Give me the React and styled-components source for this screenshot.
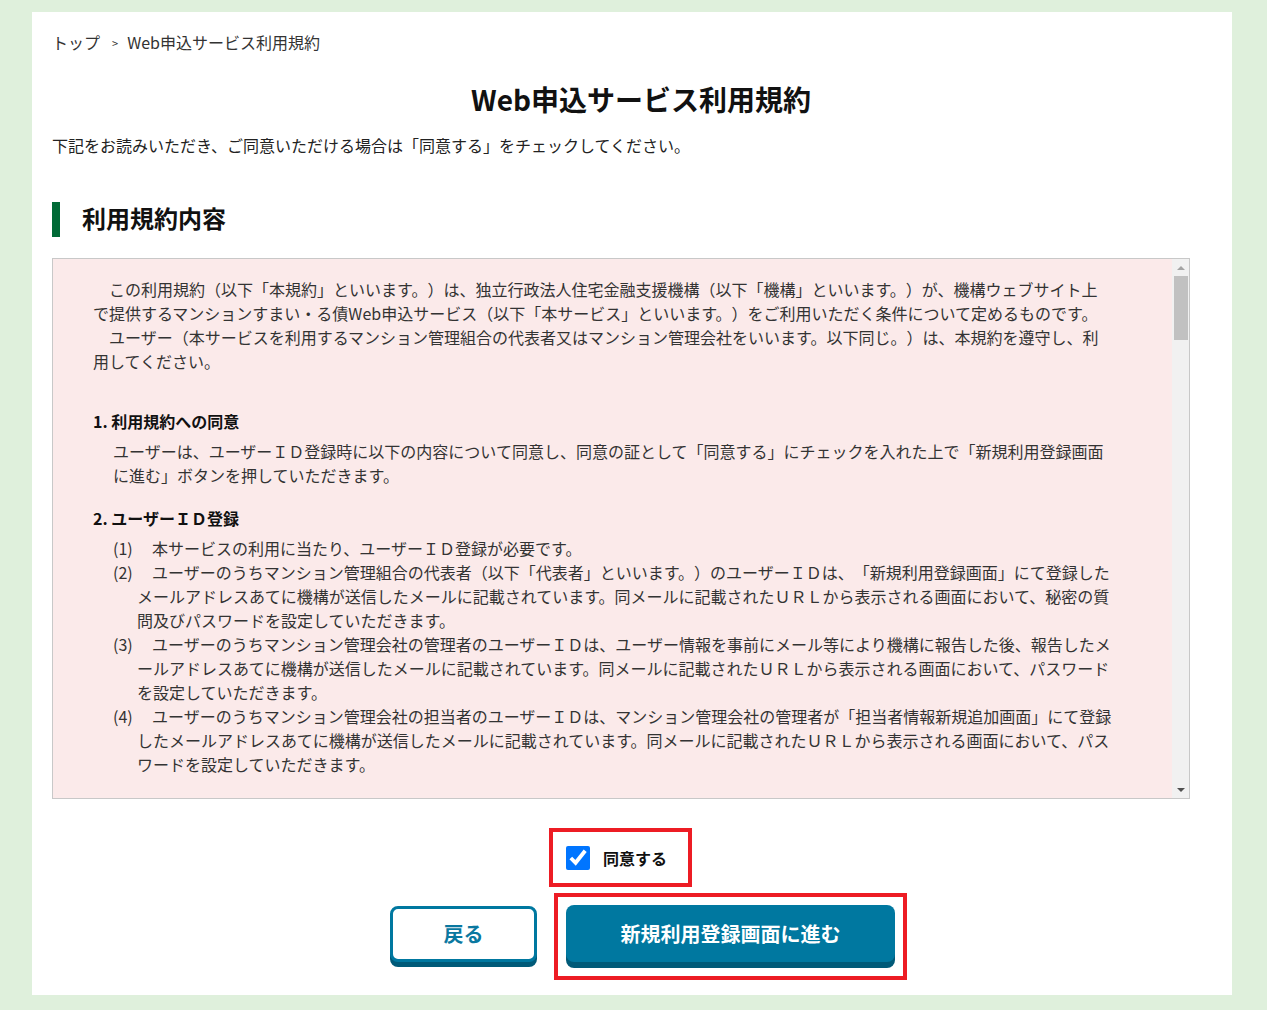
import React from "react";
import styled, { createGlobalStyle } from "styled-components";

const GlobalStyle = createGlobalStyle`
  body {
    margin: 0;
    background: #dff0dc;
    font-family: "Noto Sans CJK JP", "Noto Sans", sans-serif;
    color: #222;
    text-spacing-trim: space-all;
    text-autospace: no-autospace;
  }
`;

const intro = [
  "この利用規約（以下「本規約」といいます。）は、独立行政法人住宅金融支援機構（以下「機構」といいます。）が、機構ウェブサイト上で提供するマンションすまい・る債Web申込サービス（以下「本サービス」といいます。）をご利用いただく条件について定めるものです。",
  "ユーザー（本サービスを利用するマンション管理組合の代表者又はマンション管理会社をいいます。以下同じ。）は、本規約を遵守し、利用してください。",
];

const articles = [
  {
    title: "1. 利用規約への同意",
    body: "ユーザーは、ユーザーＩＤ登録時に以下の内容について同意し、同意の証として「同意する」にチェックを入れた上で「新規利用登録画面に進む」ボタンを押していただきます。",
  },
  {
    title: "2. ユーザーＩＤ登録",
    items: [
      "本サービスの利用に当たり、ユーザーＩＤ登録が必要です。",
      "ユーザーのうちマンション管理組合の代表者（以下「代表者」といいます。）のユーザーＩＤは、「新規利用登録画面」にて登録したメールアドレスあてに機構が送信したメールに記載されています。同メールに記載されたＵＲＬから表示される画面において、秘密の質問及びパスワードを設定していただきます。",
      "ユーザーのうちマンション管理会社の管理者のユーザーＩＤは、ユーザー情報を事前にメール等により機構に報告した後、報告したメールアドレスあてに機構が送信したメールに記載されています。同メールに記載されたＵＲＬから表示される画面において、パスワードを設定していただきます。",
      "ユーザーのうちマンション管理会社の担当者のユーザーＩＤは、マンション管理会社の管理者が「担当者情報新規追加画面」にて登録したメールアドレスあてに機構が送信したメールに記載されています。同メールに記載されたＵＲＬから表示される画面において、パスワードを設定していただきます。",
    ],
  },
  {
    title: "3. パスワード等の管理",
    items: [
      "ユーザーは、ユーザーＩＤ、パスワード及び秘密の質問の答え（以下「パスワード等」といいます。）を自己の責任において厳重に管理するものとし、第三者に開示、貸与、譲渡等をしてはならないものとします。",
      "機構は、入力されたユーザーＩＤ及びパスワード等が登録されたものと一致することを所定の方法により確認した場合には、当該ユーザーによる利用とみなします。",
      "パスワード等の管理不十分、使用上の過誤、第三者の使用等による損害の責任はユーザーが負うものとし、機構は一切の責任を負いません。",
      "ユーザーは、パスワード等が盗用され、又は第三者に使用されていることが判明した場合には、直ちにその旨を機構に連絡するものとします。",
    ],
  },
  {
    title: "4. 本サービスの内容",
    items: [
      "本サービスは、マンションすまい・る債の積立申込み及びこれに付随する手続をインターネット上で行うことができるサービスです。",
      "機構は、ユーザーに事前に通知することなく、本サービスの内容を変更し、又は追加することができるものとします。",
      "本サービスの利用時間は、機構が別に定める時間とします。",
    ],
  },
  {
    title: "5. 利用環境",
    items: [
      "本サービスを利用するために必要な機器、ソフトウェア、通信回線その他の利用環境は、ユーザーの費用と責任において準備するものとします。",
      "本サービスの利用に係る通信料等の費用は、ユーザーの負担とします。",
    ],
  },
  {
    title: "6. 禁止事項",
    body: "ユーザーは、本サービスの利用に当たり、次の各号に該当する行為を行ってはならないものとします。",
    items: [
      "虚偽の情報を登録し、又は他人になりすまして本サービスを利用する行為",
      "本サービスの運営を妨げ、又は機構の信用を毀損する行為",
      "本サービスに関連するコンピュータ・システムに不正にアクセスし、又はこれに支障を及ぼす行為",
      "法令若しくは公序良俗に違反する行為又はそのおそれのある行為",
      "その他機構が不適切と判断する行為",
    ],
  },
  {
    title: "7. 本サービスの停止及び中断",
    items: [
      "機構は、システムの保守、点検若しくは更新を行う場合その他機構が必要と判断した場合には、ユーザーに事前に通知することなく、本サービスの全部又は一部を停止し、又は中断することができるものとします。",
      "機構は、本サービスの停止又は中断によりユーザー又は第三者が被った損害について、一切の責任を負いません。",
    ],
  },
  {
    title: "8. 免責事項",
    body: "機構は、通信回線やコンピュータ等の障害によるシステムの中断、遅延、中止、データの消失、データへの不正アクセスにより生じた損害その他本サービスに関してユーザーに生じた損害について、一切の責任を負いません。",
  },
  {
    title: "9. 個人情報の取扱い",
    body: "機構は、本サービスの利用により取得した個人情報を、機構の個人情報保護方針に基づき適切に取り扱います。",
  },
  {
    title: "10. 本規約の変更",
    body: "機構は、ユーザーの承諾を得ることなく、本規約を変更することができるものとします。変更後の本規約は、機構ウェブサイト上に掲載した時点から効力を生じるものとします。",
  },
  {
    title: "11. 準拠法及び管轄裁判所",
    body: "本規約の準拠法は日本法とし、本サービスに関して紛争が生じた場合には、東京地方裁判所を第一審の専属的合意管轄裁判所とします。",
  },
];

const Panel = styled.main`
  width: 1200px;
  margin: 12px 0 16px 32px;
  padding: 16px 20px 15px;
  box-sizing: border-box;
  background: #fff;
`;

const Breadcrumb = styled.nav`
  display: flex;
  align-items: center;
  font-size: 16px;
  line-height: 24px;
  color: #333;
`;

const Crumb = styled.span`
  color: #333;
`;

const Separator = styled.span`
  font-size: 11px;
  margin: 3px 9px 0 12px;
  color: #333;
`;

const Title = styled.h1`
  margin: 24px 0 0;
  padding-left: 18px;
  text-align: center;
  font-size: 28px;
  line-height: 40px;
  font-weight: 700;
  color: #111;
`;

const Lead = styled.p`
  margin: 14px 0 0;
  font-size: 16px;
  line-height: 24px;
  color: #222;
`;

const SectionHeading = styled.h2`
  display: flex;
  align-items: flex-start;
  gap: 22px;
  margin: 45px 0 0;
  font-size: 24px;
  line-height: 31px;
  font-weight: 700;
  color: #111;

  &::before {
    content: "";
    width: 8px;
    height: 35px;
    background: #006a36;
  }
`;

const TermsFrame = styled.div`
  display: flex;
  width: 1138px;
  height: 541px;
  margin-top: 21px;
  box-sizing: border-box;
  border: 1px solid #c8c8c8;
  background: #fbeaea;
`;

const TermsViewport = styled.div`
  flex: 1;
  overflow-y: auto;
  scrollbar-width: none;
  padding: 18px 58px 18px 40px;
  font-size: 16px;
  line-height: 24px;
  color: #333;
`;

const ScrollTrack = styled.div`
  display: flex;
  flex-direction: column;
  width: 17px;
  background: #f1f1f1;
`;

const ArrowButton = styled.div`
  display: flex;
  align-items: center;
  justify-content: center;
  height: 17px;

  &::after {
    content: "";
    border-left: 4px solid transparent;
    border-right: 4px solid transparent;
    ${(p) =>
      p.$down
        ? "border-top: 4px solid #505050;"
        : "border-bottom: 4px solid #a3a3a3;"}
  }
`;

const Thumb = styled.div`
  height: 64px;
  margin: 0 1px 0 2px;
  background: #c1c1c1;
`;

const TrackRest = styled.div`
  flex: 1;
`;

const Intro = styled.p`
  margin: 0;
  padding-right: 8px;
  text-indent: 1em;
`;

const Article = styled.section`
  margin-top: ${(p) => (p.$first ? "36px" : "19px")};
`;

const ArticleTitle = styled.h3`
  margin: 0 0 6px;
  font-size: 16px;
  line-height: 24px;
  font-weight: 700;
  color: #111;
`;

const ArticleBody = styled.p`
  margin: 0;
  padding-left: 20px;
`;

const ItemList = styled.ol`
  margin: 0;
  padding: 0 0 0 20px;
  list-style: none;
`;

const Item = styled.li`
  padding-left: 24px;
  text-indent: -24px;
`;

const ItemNo = styled.span`
  display: inline-block;
  width: 39px;
  text-indent: 0;
`;

const Highlight = styled.div`
  display: flex;
  align-items: center;
  border: 4px solid #ed1c24;
  padding: ${(p) => p.$pad};
`;

const AgreeRow = styled.div`
  display: flex;
  justify-content: center;
  margin-top: 29px;
  padding-right: 23px;
`;

const AgreeLabel = styled.label`
  display: flex;
  align-items: center;
  gap: 13px;
  font-size: 16px;
  line-height: 24px;
  font-weight: 700;
  color: #111;
  cursor: pointer;
`;

const Checkbox = styled.input`
  width: 24px;
  height: 24px;
  margin: 0;
  accent-color: #0075ff;
`;

const ButtonRow = styled.div`
  display: flex;
  justify-content: center;
  align-items: center;
  gap: 17px;
  margin-top: 6px;
  padding-left: 33px;
`;

const Button = styled.button`
  box-sizing: border-box;
  width: ${(p) => (p.$primary ? "329px" : "147px")};
  height: ${(p) => (p.$primary ? "57px" : "56px")};
  margin-bottom: 6px;
  border-radius: 8px;
  border: ${(p) => (p.$primary ? "none" : "3px solid #0078a0")};
  background: ${(p) => (p.$primary ? "#0078a0" : "#fff")};
  box-shadow: 0 ${(p) => (p.$primary ? "6px" : "5px")} 0 #005a78;
  color: ${(p) => (p.$primary ? "#fff" : "#0a78a0")};
  font-family: inherit;
  font-size: 20px;
  font-weight: 700;
  cursor: pointer;
`;

export default function App() {
  return (
    <>
      <GlobalStyle />
      <Panel>
        <Breadcrumb>
          <Crumb>トップ</Crumb>
          <Separator>&gt;</Separator>
          <Crumb>Web申込サービス利用規約</Crumb>
        </Breadcrumb>
        <Title>Web申込サービス利用規約</Title>
        <Lead>
          下記をお読みいただき、ご同意いただける場合は「同意する」をチェックしてください。
        </Lead>
        <SectionHeading>利用規約内容</SectionHeading>
        <TermsFrame>
          <TermsViewport>
            {intro.map((text) => (
              <Intro key={text}>{text}</Intro>
            ))}
            {articles.map((a, i) => (
              <Article key={a.title} $first={i === 0}>
                <ArticleTitle>{a.title}</ArticleTitle>
                {a.body && <ArticleBody>{a.body}</ArticleBody>}
                {a.items && (
                  <ItemList>
                    {a.items.map((item, n) => (
                      <Item key={n}>
                        <ItemNo>({n + 1})</ItemNo>
                        {item}
                      </Item>
                    ))}
                  </ItemList>
                )}
              </Article>
            ))}
          </TermsViewport>
          <ScrollTrack aria-hidden="true">
            <ArrowButton />
            <Thumb />
            <TrackRest />
            <ArrowButton $down />
          </ScrollTrack>
        </TermsFrame>
        <AgreeRow>
          <Highlight $pad="14px 21px 13px 13px">
            <AgreeLabel>
              <Checkbox type="checkbox" defaultChecked />
              同意する
            </AgreeLabel>
          </Highlight>
        </AgreeRow>
        <ButtonRow>
          <Button type="button">戻る</Button>
          <Highlight $pad="8px">
            <Button type="button" $primary>
              新規利用登録画面に進む
            </Button>
          </Highlight>
        </ButtonRow>
      </Panel>
    </>
  );
}
